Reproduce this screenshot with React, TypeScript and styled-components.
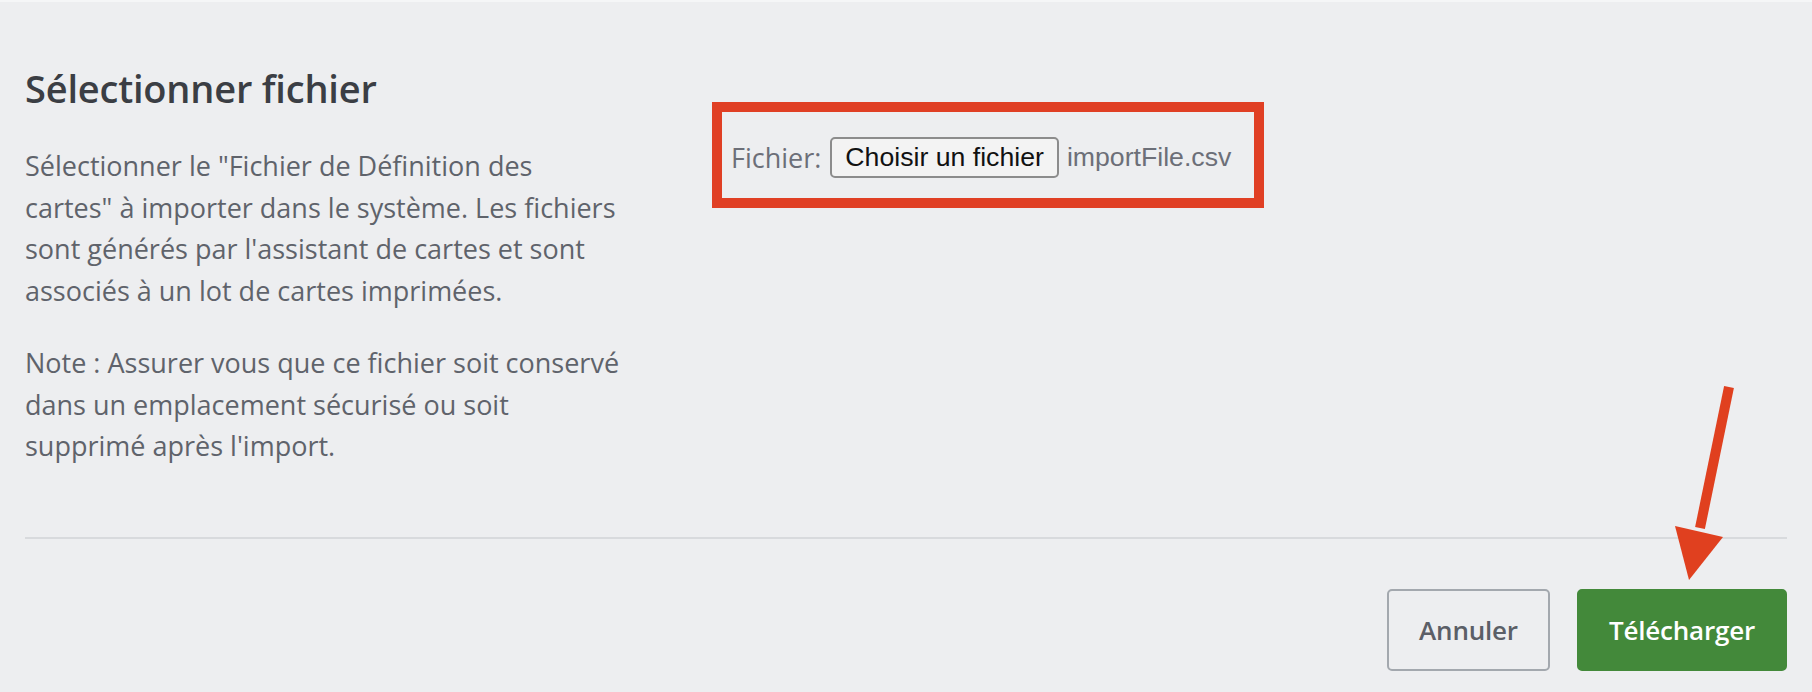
import React from "react";
import styled, { createGlobalStyle } from "styled-components";

const GlobalStyle = createGlobalStyle`
  html, body {
    margin: 0;
    padding: 0;
    background: #edeef0;
  }
  body {
    font-family: "Open Sans", "Noto Sans", sans-serif;
  }
`;

const Page = styled.div`
  position: relative;
  box-sizing: border-box;
  width: 1812px;
  height: 692px;
  padding: 64px 25px 0 25px;
  border-top: 2px solid #f5f6f7;
  background: #edeef0;
  overflow: hidden;
`;

const Top = styled.div`
  display: grid;
  grid-template-columns: 687px 552px;
  align-items: start;
`;

const InfoColumn = styled.div`
  display: flex;
  flex-direction: column;
`;

const Title = styled.h2`
  margin: 0;
  font-family: "Open Sans", sans-serif;
  font-weight: 600;
  font-size: 38px;
  line-height: 44px;
  color: #3b3e44;
  letter-spacing: -0.2px;
`;

const Paragraph = styled.p<{ $gap: number }>`
  margin: ${(p) => p.$gap}px 0 0 0;
  font-family: "Open Sans", sans-serif;
  font-size: 27px;
  line-height: 41.7px;
  color: #5f636b;
  white-space: nowrap;
`;

const Highlight = styled.div`
  box-sizing: border-box;
  margin-top: 36px;
  width: 552px;
  height: 106px;
  border: 10px solid #e03f24;
  display: flex;
  align-items: center;
  padding: 4px 0 0 9px;
  gap: 8px;
`;

const FieldLabel = styled.span`
  font-family: "Open Sans", sans-serif;
  font-size: 27px;
  color: #6c6f78;
  margin-right: 1px;
`;

const FileButton = styled.button`
  box-sizing: border-box;
  height: 41px;
  padding: 0 13px;
  border: 2px solid #8c8c8c;
  border-radius: 5px;
  background: #f3f3f3;
  font-family: "Liberation Sans", Arial, sans-serif;
  font-size: 26.67px;
  color: #111;
  line-height: 1;
`;

const FileName = styled.span`
  font-family: "Liberation Sans", Arial, sans-serif;
  font-size: 26.67px;
  color: #6c6f78;
`;

const Divider = styled.hr`
  margin: 70px 0 0 0;
  border: none;
  height: 2px;
  background: #d8dadd;
`;

const Actions = styled.div`
  display: flex;
  justify-content: flex-end;
  align-items: center;
  gap: 27px;
  margin-top: 50px;
`;

const ActionButton = styled.button<{ $primary?: boolean }>`
  box-sizing: border-box;
  height: 82px;
  padding: 0;
  width: ${(p) => (p.$primary ? "210px" : "163px")};
  border-radius: 5px;
  border: 2px solid ${(p) => (p.$primary ? "#43893a" : "#a3a8ae")};
  background: ${(p) => (p.$primary ? "#43893a" : "transparent")};
  color: ${(p) => (p.$primary ? "#ffffff" : "#5b5f67")};
  font-family: "Open Sans", sans-serif;
  font-weight: 600;
  font-size: 26px;
  letter-spacing: -0.2px;
`;

const ArrowOverlay = styled.svg`
  position: absolute;
  left: 1660px;
  top: 368px;
  pointer-events: none;
`;

export default function App() {
  return (
    <>
      <GlobalStyle />
      <Page>
        <Top>
          <InfoColumn>
            <Title>Sélectionner fichier</Title>
            <Paragraph $gap={35}>
              Sélectionner le "Fichier de Définition des
              <br />
              cartes" à importer dans le système. Les fichiers
              <br />
              sont générés par l'assistant de cartes et sont
              <br />
              associés à un lot de cartes imprimées.
            </Paragraph>
            <Paragraph $gap={30}>
              Note : Assurer vous que ce fichier soit conservé
              <br />
              dans un emplacement sécurisé ou soit
              <br />
              supprimé après l'import.
            </Paragraph>
          </InfoColumn>
          <Highlight>
            <FieldLabel>Fichier:</FieldLabel>
            <FileButton type="button">Choisir un fichier</FileButton>
            <FileName>importFile.csv</FileName>
          </Highlight>
        </Top>
        <Divider />
        <Actions>
          <ActionButton type="button">Annuler</ActionButton>
          <ActionButton type="button" $primary>
            Télécharger
          </ActionButton>
        </Actions>
        <ArrowOverlay width="80" height="220" viewBox="0 0 80 220">
          <line x1="69" y1="17" x2="40" y2="158" stroke="#e0401f" strokeWidth="10" />
          <polygon points="15,156 63,167 29,210" fill="#e0401f" />
        </ArrowOverlay>
      </Page>
    </>
  );
}
